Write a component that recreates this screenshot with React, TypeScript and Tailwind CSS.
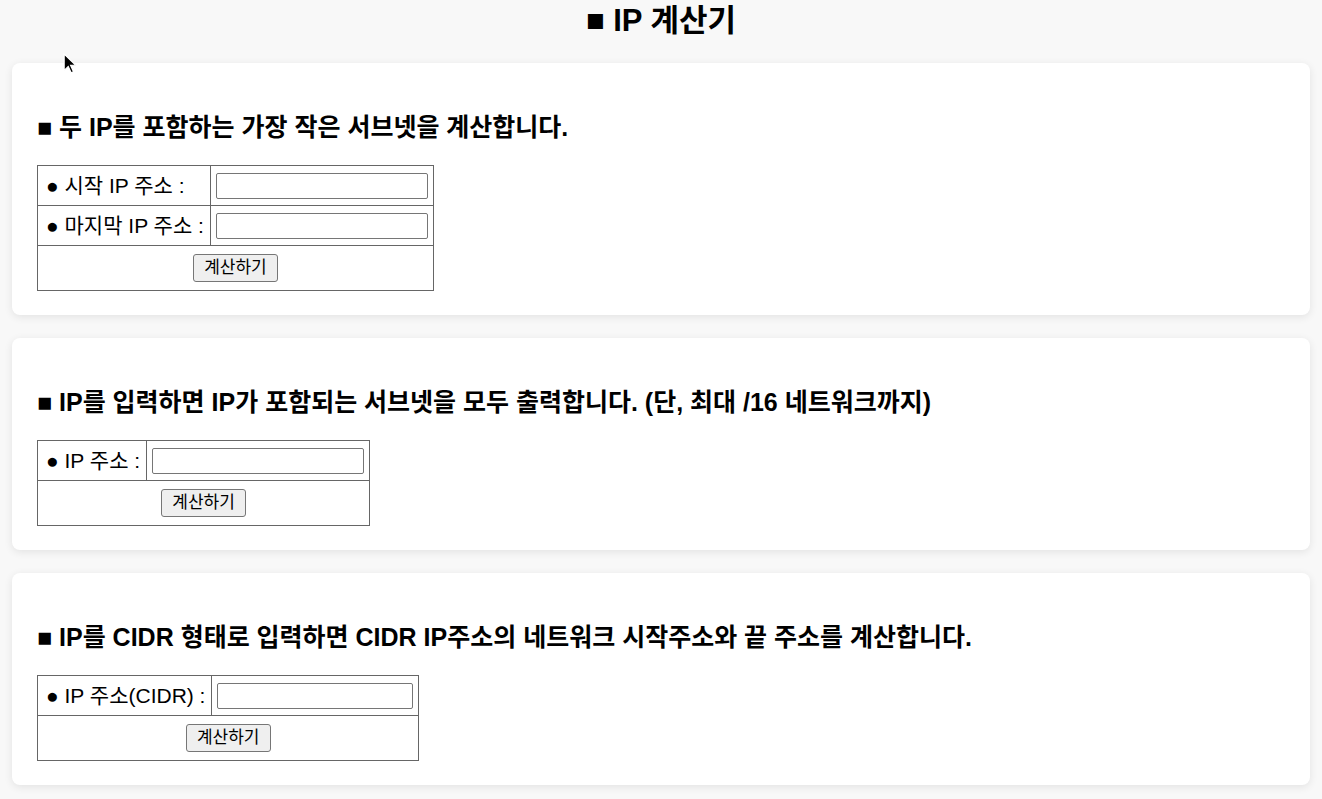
import React from 'react';

const font = { fontFamily: '"Liberation Sans", "Noto Sans CJK KR", Arial, sans-serif' };

interface Field {
  label: string;
}

interface SectionProps {
  title: string;
  fields: Field[];
  inputWidth?: 'wide' | 'narrow';
}

function Section({ title, fields, inputWidth = 'wide' }: SectionProps) {
  return (
    <div className="mx-[12px] rounded-[8px] bg-white px-[25px] pt-[25px] pb-[24px] shadow-[0_2px_8px_rgba(0,0,0,0.09)]">
      <h3 className="mt-[26px] mb-[25px] text-[25px] font-bold leading-[26px] text-black">■ {title}</h3>
      <table className="border-collapse border border-[#666]">
        <tbody>
          {fields.map((f) => (
            <tr key={f.label} className="h-[40px]">
              <td className="border border-[#666] pl-[8px] pr-[6px] text-[21px] leading-[24px] text-black whitespace-nowrap">● {f.label}</td>
              <td className="border border-[#666] px-[5px]">
                <input
                  type="text"
                  className={
                    inputWidth === 'wide'
                      ? 'block h-[26px] w-[212px] rounded-[2px] border border-[#767676] bg-white px-1 text-[14px]'
                      : 'block h-[26px] w-[196px] rounded-[2px] border border-[#767676] bg-white px-1 text-[14px]'
                  }
                />
              </td>
            </tr>
          ))}
          <tr className="h-[45px]">
            <td colSpan={2} className="border border-[#666] text-center">
              <button className="h-[28px] rounded-[3px] border border-[#767676] bg-[#efefef] px-[10px] text-[17px] leading-[20px] text-black">
                계산하기
              </button>
            </td>
          </tr>
        </tbody>
      </table>
    </div>
  );
}

export default function App() {
  return (
    <div className="relative min-h-[799px] bg-[#f8f8f8] pb-[12px]" style={font}>
      <h1 className="m-0 text-center text-[31px] font-bold leading-[42px] text-black">■ IP 계산기</h1>
      <div className="mt-[21px] flex flex-col gap-[23px]">
        <Section
          title="두 IP를 포함하는 가장 작은 서브넷을 계산합니다."
          fields={[{ label: '시작 IP 주소 :' }, { label: '마지막 IP 주소 :' }]}
        />
        <Section
          title="IP를 입력하면 IP가 포함되는 서브넷을 모두 출력합니다. (단, 최대 /16 네트워크까지)"
          fields={[{ label: 'IP 주소 :' }]}
        />
        <Section
          title="IP를 CIDR 형태로 입력하면 CIDR IP주소의 네트워크 시작주소와 끝 주소를 계산합니다."
          fields={[{ label: 'IP 주소(CIDR) :' }]}
          inputWidth="narrow"
        />
      </div>
      <svg className="pointer-events-none absolute left-[63px] top-[53px]" width="14" height="21" viewBox="0 0 12 18">
        <path d="M1 1 L1 15 L4.5 11.5 L7 17 L9 16 L6.5 10.5 L11 10.5 Z" fill="#000" stroke="#fff" strokeWidth="1" />
      </svg>
    </div>
  );
}
